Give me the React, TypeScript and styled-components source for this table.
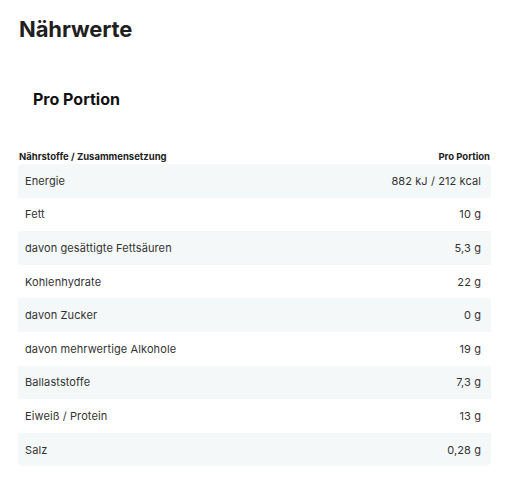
import React from "react"
import styled, { createGlobalStyle } from "styled-components"

const GlobalStyle = createGlobalStyle`
    body {
        margin: 0;
        background: #ffffff;
        font-family: Inter, "Noto Sans", sans-serif;
        color: #222222;
    }
`

interface INutrient {
    name: string
    value: string
}

const nutrients: INutrient[] = [
    { name: "Energie", value: "882 kJ / 212 kcal" },
    { name: "Fett", value: "10 g" },
    { name: "davon gesättigte Fettsäuren", value: "5,3 g" },
    { name: "Kohlenhydrate", value: "22 g" },
    { name: "davon Zucker", value: "0 g" },
    { name: "davon mehrwertige Alkohole", value: "19 g" },
    { name: "Ballaststoffe", value: "7,3 g" },
    { name: "Eiweiß / Protein", value: "13 g" },
    { name: "Salz", value: "0,28 g" },
]

function App(): JSX.Element {
    return (
        <PageSCP>
            <GlobalStyle />
            <TitleSCP>Nährwerte</TitleSCP>

            <TabSCP>Pro Portion</TabSCP>

            <TableSCP>
                <HeadRowSCP>
                    <span>Nährstoffe / Zusammensetzung</span>
                    <span>Pro Portion</span>
                </HeadRowSCP>
                <BodySCP>
                    {nutrients.map((item, index) => (
                        <RowSCP key={item.name} $shaded={index % 2 === 0}>
                            <span>{item.name}</span>
                            <ValueSCP>{item.value}</ValueSCP>
                        </RowSCP>
                    ))}
                </BodySCP>
            </TableSCP>
        </PageSCP>
    )
}

export default App

const PageSCP = styled.div`
    width: 512px;
    padding: 0 21px 0 18px;
    box-sizing: border-box;
`

const TitleSCP = styled.h1`
    margin: 0;
    padding-top: 15px;
    padding-left: 1px;
    font-size: 22px;
    line-height: 28px;
    font-weight: 700;
    color: #1f1f1f;
    letter-spacing: -0.1px;
`

const TabSCP = styled.div`
    margin-top: 46px;
    padding-left: 15px;
    font-size: 16px;
    line-height: 20px;
    font-weight: 700;
    color: #111111;
`

const TableSCP = styled.div`
    margin-top: 41px;
`

const HeadRowSCP = styled.div`
    display: flex;
    justify-content: space-between;
    align-items: center;
    height: 13px;
    padding: 0 1px 0 1px;
    font-size: 9.5px;
    font-weight: 700;
    color: #222222;
`

const BodySCP = styled.div`
    margin-top: 1px;
    border-radius: 5px;
    overflow: hidden;
`

const RowSCP = styled.div<{ $shaded: boolean }>`
    display: flex;
    justify-content: space-between;
    align-items: center;
    height: 33.6px;
    padding: 0 10px 0 7px;
    background: ${(props) => (props.$shaded ? "#f5f8f9" : "#ffffff")};
    font-size: 11px;
    letter-spacing: 0.1px;
    color: #333333;
`

const ValueSCP = styled.span`
    text-align: right;
    color: #333333;
`
